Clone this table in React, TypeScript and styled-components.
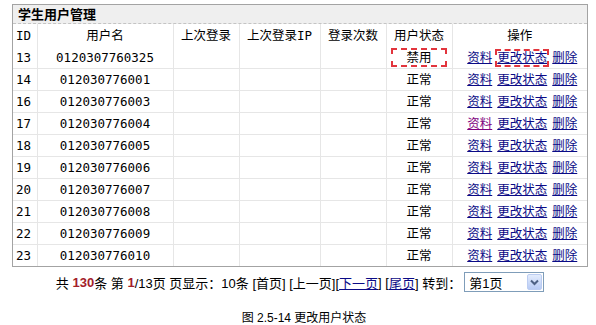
import React from "react";
import styled, { createGlobalStyle } from "styled-components";

const Global = createGlobalStyle`
  html, body { margin: 0; padding: 0; background: #fff; }
  body {
    font-family: "DejaVu Sans Mono", "Noto Sans CJK SC", monospace;
    font-size: 12.5px;
    color: #000;
  }
`;

const Page = styled.div`
  width: 596px;
  padding: 4px 0 0 12px;
  box-sizing: border-box;
  display: flex;
  flex-direction: column;
`;

const Panel = styled.section`
  width: 576px;
  border: 1px solid #a3a3a3;
  box-sizing: border-box;
`;

const PanelTitle = styled.h2`
  margin: 0;
  height: 18px;
  line-height: 18px;
  padding-left: 5px;
  background: #efefef;
  border-bottom: 1px dashed #c4c4c4;
  font-family: "Noto Sans CJK SC", sans-serif;
  font-size: 13px;
  font-weight: bold;
`;

const Grid = styled.table`
  width: 100%;
  border-collapse: collapse;
  table-layout: fixed;
  tr:first-child > * { border-top: none; }
  tr:last-child > * { border-bottom: none; }
`;

const HeadCell = styled.th<{ $align?: "left" | "center" }>`
  height: 23px;
  padding: 0 0 0 ${(p) => (p.$align === "left" ? "3px" : "0")};
  border: 1px solid #e6e6e6;
  font-weight: normal;
  text-align: ${(p) => p.$align ?? "center"};
  line-height: 14px;
  white-space: nowrap;
  &:first-child { border-left: none; }
  &:last-child { border-right: none; }
`;

const Cell = styled.td<{ $align?: "left" | "center" }>`
  height: 21px;
  padding: 0 0 0 ${(p) => (p.$align === "left" ? "3px" : "0")};
  border: 1px solid #e6e6e6;
  text-align: ${(p) => p.$align ?? "center"};
  line-height: 14px;
  white-space: nowrap;
  &:first-child { border-left: none; }
  &:last-child { border-right: none; }
`;

const Marked = styled.span`
  display: inline-block;
  padding: 1px 13px 0;
  line-height: 14px;
  outline: 2px dashed #e2353d;
`;

const Link = styled.a<{ $visited?: boolean; $marked?: boolean }>`
  color: ${(p) => (p.$visited ? "#800080" : "#0a0a86")};
  text-decoration: underline;
  cursor: pointer;
  ${(p) => (p.$marked ? "outline: 2px dashed #e2353d; outline-offset: 0px;" : "")}
`;

const Actions = styled.span`
  display: inline-flex;
  gap: 5px;
  margin-left: 5px;
`;

const Pager = styled.div`
  width: 576px;
  margin-top: 5px;
  height: 20px;
  display: flex;
  align-items: center;
  justify-content: center;
  white-space: pre;
  font-family: "Liberation Sans", "Noto Sans CJK SC", sans-serif;
  font-size: 13px;
`;

const Hot = styled.b`
  color: #a3202a;
  font-weight: bold;
`;

const PageSelect = styled.div`
  display: flex;
  align-items: center;
  justify-content: space-between;
  width: 80px;
  height: 20px;
  margin-left: 3px;
  box-sizing: border-box;
  border: 1px solid #7f9db9;
  padding: 0 1px 0 4px;
  background: #fff;
`;

const SelectArrow = styled.span`
  display: flex;
  align-items: center;
  justify-content: center;
  width: 15px;
  height: 16px;
  box-sizing: border-box;
  border: 1px solid #bccdf2;
  border-radius: 2px;
  background: linear-gradient(#e3ecfd, #b8cbf5);
`;

const Caption = styled.div`
  width: 576px;
  margin-top: 19px;
  text-align: center;
  font-family: "Liberation Sans", "Noto Sans CJK SC", sans-serif;
  font-size: 12px;
  line-height: 14px;
  padding-left: 8px;
  box-sizing: border-box;
`;

const rows = [
  { id: "13", name: "0120307760325", status: "禁用", marked: true },
  { id: "14", name: "012030776001", status: "正常" },
  { id: "16", name: "012030776003", status: "正常" },
  { id: "17", name: "012030776004", status: "正常", visited: true },
  { id: "18", name: "012030776005", status: "正常" },
  { id: "19", name: "012030776006", status: "正常" },
  { id: "20", name: "012030776007", status: "正常" },
  { id: "21", name: "012030776008", status: "正常" },
  { id: "22", name: "012030776009", status: "正常" },
  { id: "23", name: "012030776010", status: "正常" },
];

const widths = [24, 136, 66, 81, 66, 66, 135];

export default function App() {
  return (
    <>
      <Global />
      <Page>
        <Panel>
          <PanelTitle>学生用户管理</PanelTitle>
          <Grid>
            <colgroup>
              {widths.map((w, i) => (
                <col key={i} style={{ width: w }} />
              ))}
            </colgroup>
            <thead>
              <tr>
                <HeadCell $align="left">ID</HeadCell>
                <HeadCell>用户名</HeadCell>
                <HeadCell>上次登录</HeadCell>
                <HeadCell>上次登录IP</HeadCell>
                <HeadCell>登录次数</HeadCell>
                <HeadCell>用户状态</HeadCell>
                <HeadCell>操作</HeadCell>
              </tr>
            </thead>
            <tbody>
              {rows.map((r) => (
                <tr key={r.id}>
                  <Cell $align="left">{r.id}</Cell>
                  <Cell>{r.name}</Cell>
                  <Cell />
                  <Cell />
                  <Cell />
                  <Cell>{r.marked ? <Marked>{r.status}</Marked> : r.status}</Cell>
                  <Cell>
                    <Actions>
                      <Link $visited={r.visited}>资料</Link>
                      <Link $marked={r.marked}>更改状态</Link>
                      <Link>删除</Link>
                    </Actions>
                  </Cell>
                </tr>
              ))}
            </tbody>
          </Grid>
        </Panel>
        <Pager>
          {"共 "}
          <Hot>130</Hot>
          {"条 第 "}
          <Hot>1</Hot>
          {"/13页 页显示：10条 [首页] [上一页]["}
          <Link>下一页</Link>
          {"] ["}
          <Link>尾页</Link>
          {"] 转到："}
          <PageSelect>
            <span>第1页</span>
            <SelectArrow>
              <svg width="9" height="7" viewBox="0 0 9 7">
                <path d="M1 1.5 L4.5 5 L8 1.5" fill="none" stroke="#4d6185" strokeWidth="2" />
              </svg>
            </SelectArrow>
          </PageSelect>
        </Pager>
        <Caption>图 2.5-14 更改用户状态</Caption>
      </Page>
    </>
  );
}
